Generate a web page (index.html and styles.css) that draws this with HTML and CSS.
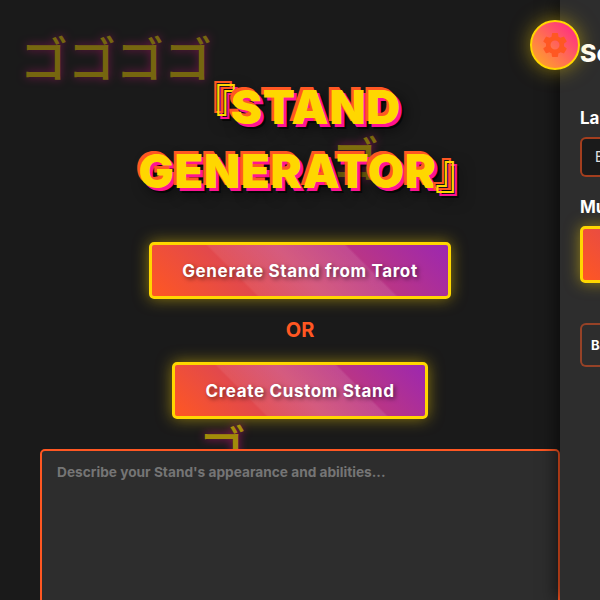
FILE: index.html
```html
<!DOCTYPE html>
<html lang="en">
<head>
  <meta charset="UTF-8" />
  <meta name="viewport" content="width=device-width, initial-scale=1.0"/>
  <title>Stand Generator</title>
  <link rel="stylesheet" href="styles.css">
</head>
<body>

  <div class="menacing menacing-a">ゴゴゴゴ</div>
  <div class="menacing menacing-b">ゴ</div>
  <div class="menacing menacing-c">ゴ</div>

  <main class="main">
    <h1 class="title"><span class="open">『</span>Stand Generator<span class="close">』</span></h1>

    <div class="actions">
      <button class="btn">Generate Stand from Tarot</button>
      <p class="or">OR</p>
      <button class="btn">Create Custom Stand</button>
    </div>

    <textarea class="description" placeholder="Describe your Stand's appearance and abilities..."></textarea>
  </main>

  <button class="gear" aria-label="Settings">
    <svg viewBox="0 0 24 24" width="30" height="30">
      <path fill="#ff5722" d="M19.14 12.94c.04-.3.06-.61.06-.94s-.02-.64-.07-.94l2.03-1.58a.49.49 0 0 0 .12-.61l-1.92-3.32a.49.49 0 0 0-.59-.22l-2.39.96a7 7 0 0 0-1.62-.94l-.36-2.54a.48.48 0 0 0-.48-.41h-3.84a.48.48 0 0 0-.47.41l-.36 2.54a7.3 7.3 0 0 0-1.62.94l-2.39-.96a.48.48 0 0 0-.59.22L2.74 8.87a.48.48 0 0 0 .12.61l2.03 1.58c-.05.3-.09.63-.09.94s.02.64.07.94l-2.03 1.58a.49.49 0 0 0-.12.61l1.92 3.32c.12.22.37.29.59.22l2.39-.96c.5.38 1.03.7 1.62.94l.36 2.54c.05.24.24.41.48.41h3.84c.24 0 .44-.17.47-.41l.36-2.54a7 7 0 0 0 1.62-.94l2.39.96c.22.08.47 0 .59-.22l1.92-3.32a.48.48 0 0 0-.12-.61zM12 15.6A3.6 3.6 0 1 1 12 8.4a3.6 3.6 0 0 1 0 7.2z"/>
    </svg>
  </button>

  <aside class="panel">
    <h2>Settings</h2>

    <label class="field-label">Language</label>
    <div class="select">English</div>

    <label class="field-label">Music</label>
    <button class="btn panel-btn">Play Theme Music</button>

    <button class="back-btn">Back to Main Menu</button>
  </aside>

</body>
</html>
```

FILE: styles.css
```css
* {
  margin: 0;
  padding: 0;
  box-sizing: border-box;
}

html, body {
  height: 600px;
  overflow: hidden;
}

body {
  position: relative;
  font-family: 'Inter', 'Noto Sans', sans-serif;
  background: #1a1a1a;
  color: white;
}

.main {
  position: relative;
  padding: 75px 40px 0;
  display: flex;
  flex-direction: column;
  align-items: center;
}

.title {
  width: 340px;
  font-family: 'Inter', sans-serif;
  font-size: 47px;
  font-weight: 900;
  letter-spacing: 0.7px;
  line-height: 64px;
  text-align: center;
  text-transform: uppercase;
  color: #ffd700;
  text-shadow: -3px -3px 0 #ff5722, 3px 3px 0 #ff1493, 5px 5px 0 rgba(0, 0, 0, 0.6), 6px 6px 14px rgba(0, 0, 0, 0.6);
  margin-bottom: 39px;
}

.open, .close {
  font-family: 'Noto Sans CJK JP', sans-serif;
  font-weight: 700;
  line-height: 0;
}

.open {
  margin-left: -10px;
  margin-right: -6px;
}

.close {
  margin-left: -2px;
  margin-right: -21px;
}

.actions {
  display: flex;
  flex-direction: column;
  align-items: center;
  margin-bottom: 30px;
}

.btn {
  height: 57px;
  padding: 0 30px;
  font-family: 'Inter', sans-serif;
  font-size: 17px;
  font-weight: 700;
  letter-spacing: 0.65px;
  color: white;
  border: 3px solid #ffd700;
  border-radius: 5px;
  background:
    linear-gradient(45deg, transparent 30%, rgba(255, 255, 255, 0.07) 31%, rgba(255, 255, 255, 0.15) 50%, rgba(255, 255, 255, 0.1) 70%, transparent 71%),
    linear-gradient(45deg, #ff5722, #9c27b0);
  box-shadow: 0 0 15px rgba(255, 215, 0, 0.5);
  text-shadow: 2px 2px 4px rgba(0, 0, 0, 0.5);
}

.or {
  font-size: 20px;
  font-weight: 700;
  line-height: 24px;
  color: #ff5722;
  margin: 19px 0 20px;
}

.description {
  display: block;
  width: 520px;
  height: 200px;
  padding: 13px 15px;
  font-family: 'Inter', sans-serif;
  font-size: 13.7px;
  background: #2d2d2d;
  border: 2px solid #ff5722;
  border-radius: 5px;
  color: white;
  resize: none;
}

.description::placeholder {
  color: #757575;
  font-weight: 700;
}

/* settings drawer, mostly off screen */
.panel {
  position: absolute;
  top: 0;
  left: 560px;
  width: 300px;
  height: 600px;
  padding: 29px 20px;
  background: #2d2d2d;
  box-shadow: -5px 0 15px rgba(0, 0, 0, 0.5);
}

.panel h2 {
  font-size: 25px;
  font-weight: 800;
  line-height: 48px;
  margin-bottom: 31px;
}

.field-label {
  display: block;
  font-size: 17px;
  font-weight: 700;
  line-height: 20px;
  margin-bottom: 9px;
}

.select {
  height: 40px;
  padding: 0 13px;
  margin-bottom: 20px;
  font-size: 14px;
  line-height: 36px;
  color: #e0e0e0;
  background: #1a1a1a;
  border: 2px solid rgba(255, 87, 34, 0.6);
  border-radius: 6px;
}

.panel-btn {
  display: block;
  width: 260px;
  margin-bottom: 40px;
}

.back-btn {
  display: block;
  width: 260px;
  height: 44px;
  padding: 0 9px;
  font-family: 'Inter', sans-serif;
  font-size: 13px;
  font-weight: 700;
  text-align: left;
  color: white;
  background: #2d2d2d;
  border: 2px solid rgba(255, 87, 34, 0.5);
  border-radius: 6px;
}

.gear {
  position: absolute;
  top: 20px;
  left: 530px;
  z-index: 2;
  width: 50px;
  height: 50px;
  display: flex;
  align-items: center;
  justify-content: center;
  border: 2px solid #ffd700;
  border-radius: 50%;
  background: linear-gradient(45deg, #ffb020, #ff1f8f);
  box-shadow: 0 0 20px rgba(255, 215, 0, 0.5);
}

.menacing {
  position: absolute;
  font-family: 'Noto Sans CJK JP', sans-serif;
  font-size: 48px;
  line-height: 48px;
  font-weight: 500;
  color: #ffd700;
  text-shadow: 0 0 10px #ff1493;
}

.menacing-a {
  top: 32px;
  left: 20px;
  opacity: 0.4;
}

.menacing-b {
  top: 132px;
  left: 331px;
  opacity: 0.45;
}

.menacing-c {
  top: 421px;
  left: 198px;
  opacity: 0.6;
}
```
